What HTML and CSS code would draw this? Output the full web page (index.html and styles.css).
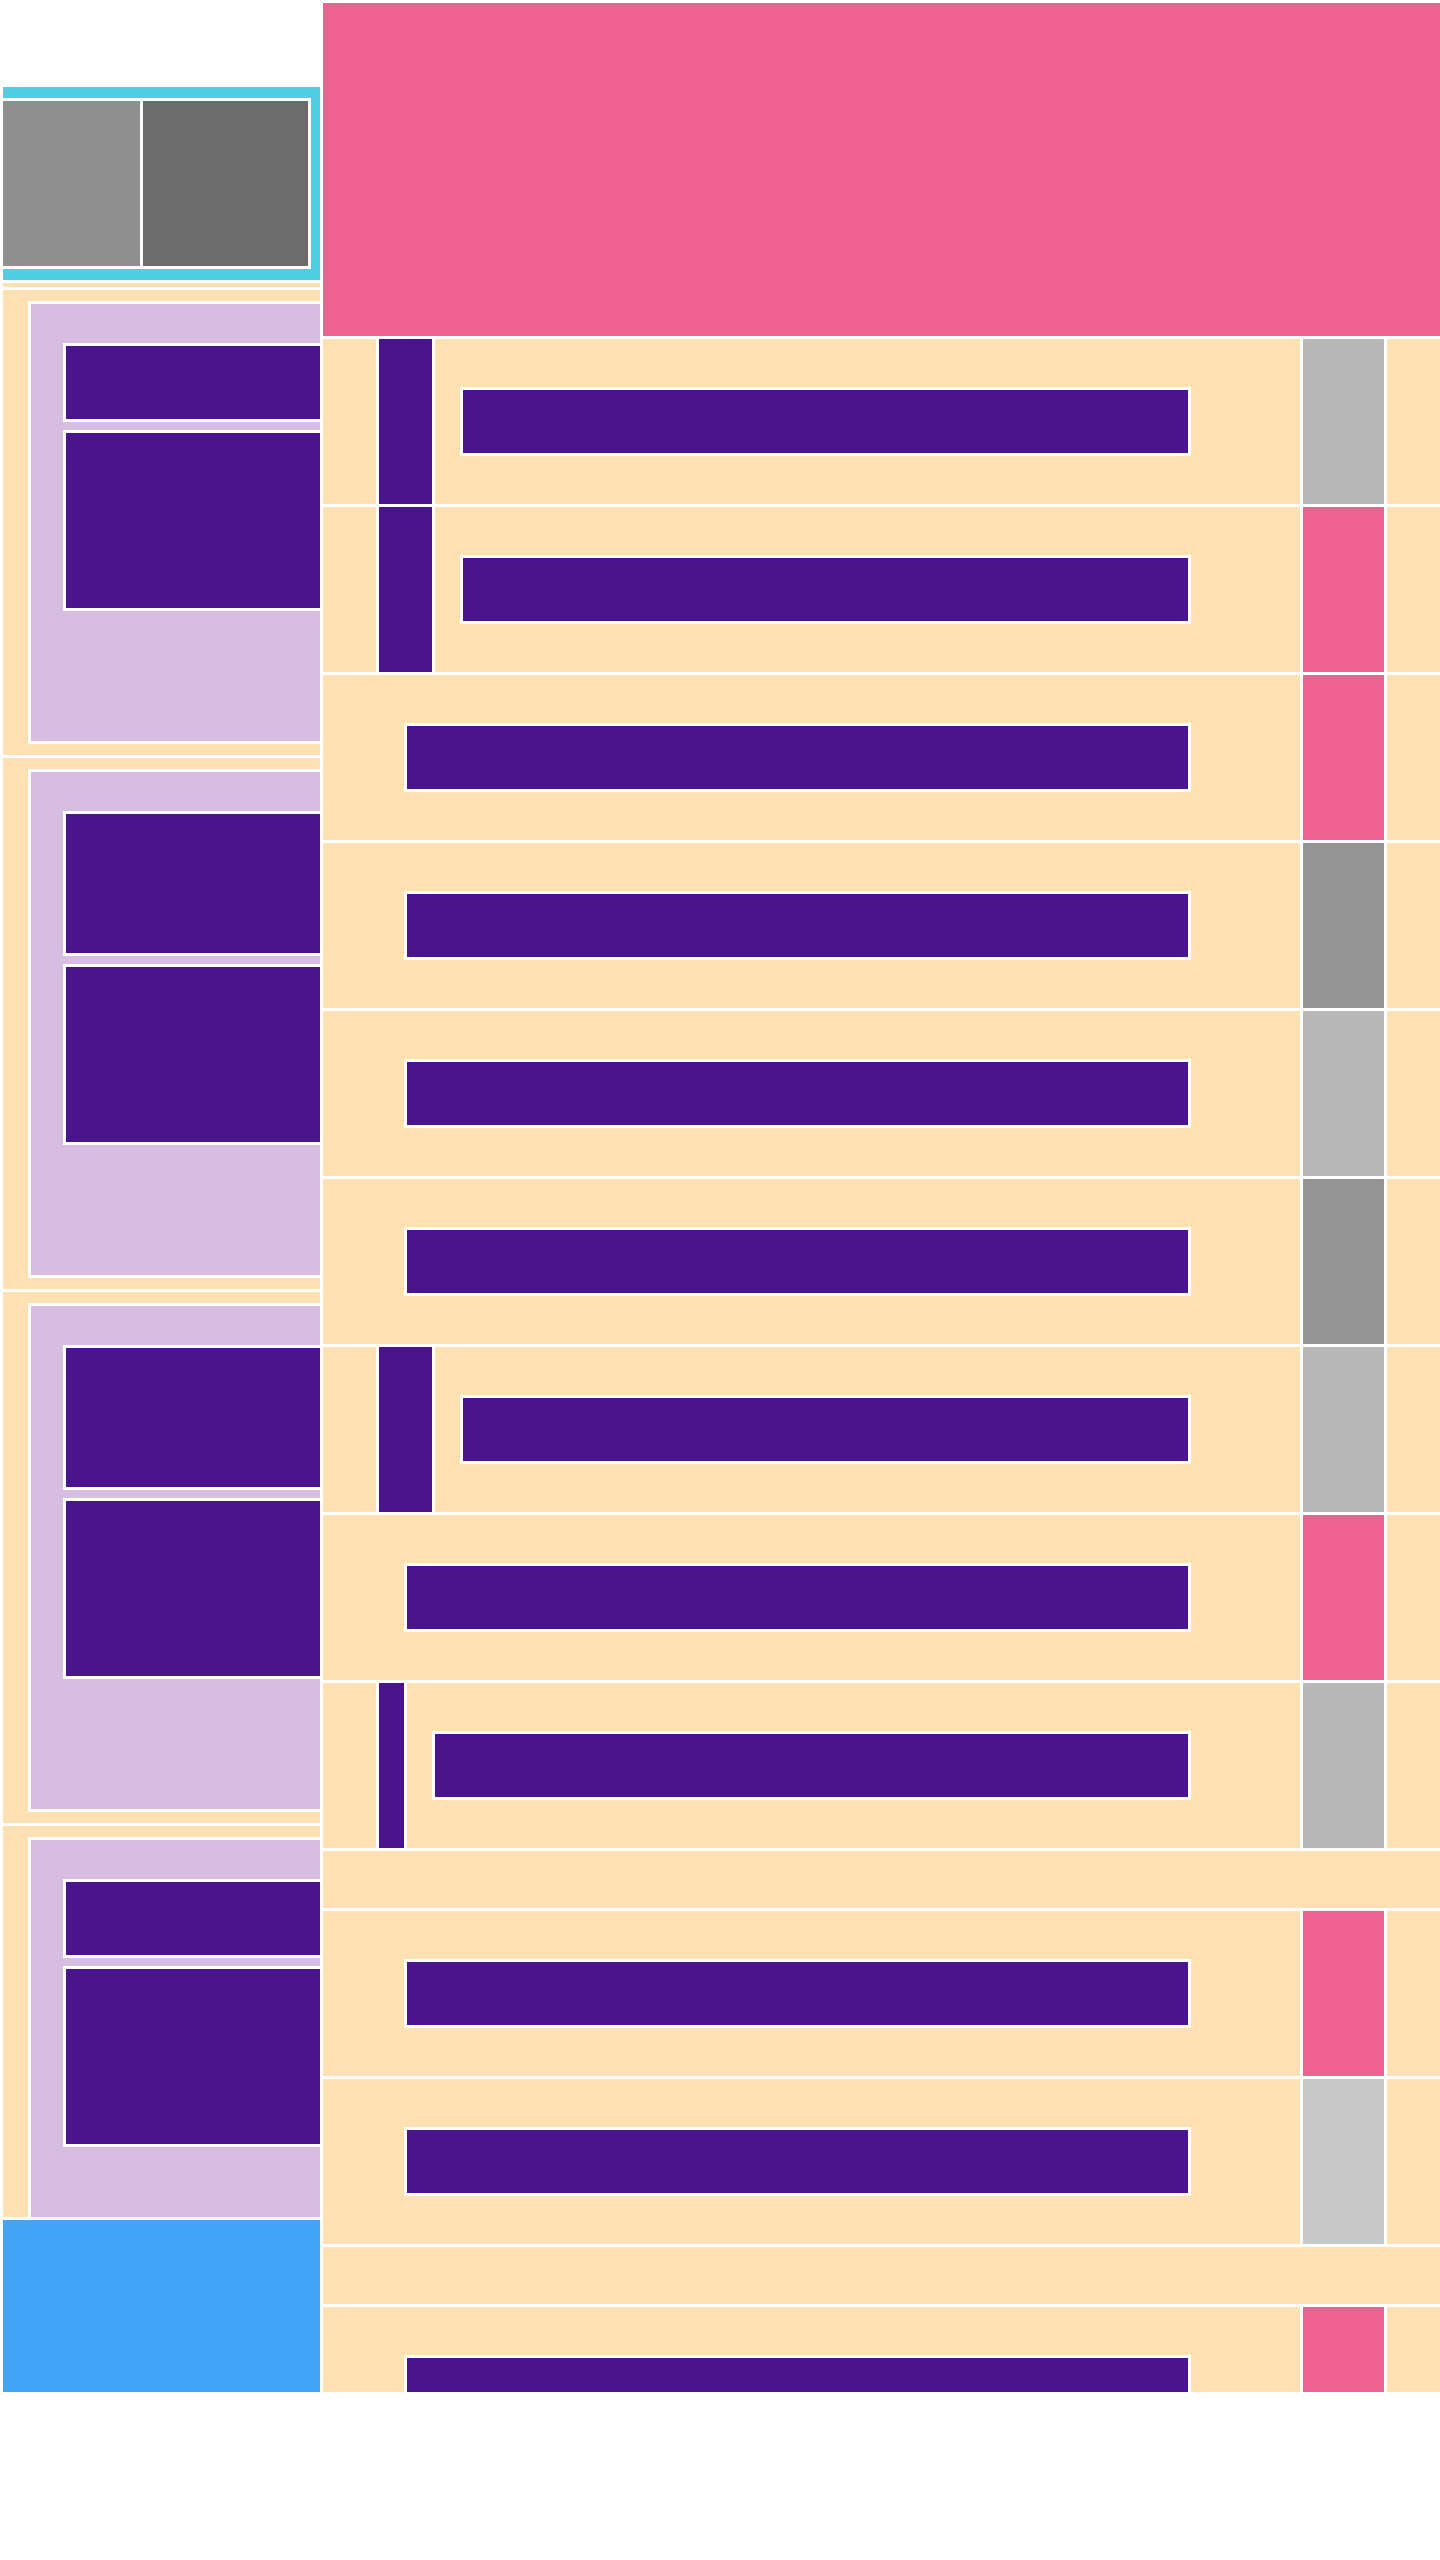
FILE: index.html
```html
<!doctype html>
<html lang="en">
    <head>
        <title>Layout</title>
        <meta charset="utf-8">
        <link rel="stylesheet" href="styles.css">
    </head>
    <body>
        <div class="app">

            <!-- left column -->
            <div class="sidebar">
                <div class="sidebar-top"></div>
                <div class="media">
                    <div class="thumbs">
                        <div class="thumb-a"></div>
                        <div class="thumb-b"></div>
                    </div>
                </div>
                <div class="divider"></div>
                <div class="card-list">
                    <div class="card">
                        <div class="panel">
                            <div class="block short"></div>
                            <div class="block"></div>
                        </div>
                    </div>
                    <div class="card">
                        <div class="panel">
                            <div class="block mid"></div>
                            <div class="block"></div>
                        </div>
                    </div>
                    <div class="card">
                        <div class="panel">
                            <div class="block mid"></div>
                            <div class="block"></div>
                        </div>
                    </div>
                    <div class="card">
                        <div class="panel">
                            <div class="block short"></div>
                            <div class="block"></div>
                        </div>
                    </div>
                </div>
                <div class="footer"></div>
            </div>

            <!-- right column -->
            <div class="main">
                <div class="hero"></div>

                <div class="row">
                    <div class="indent"></div>
                    <div class="marker"></div>
                    <div class="content"><div class="bar"></div></div>
                    <div class="status grey"></div>
                    <div class="tail"></div>
                </div>
                <div class="row">
                    <div class="indent"></div>
                    <div class="marker"></div>
                    <div class="content"><div class="bar"></div></div>
                    <div class="status pink"></div>
                    <div class="tail"></div>
                </div>
                <div class="row">
                    <div class="content flush"><div class="bar"></div></div>
                    <div class="status pink"></div>
                    <div class="tail"></div>
                </div>
                <div class="row">
                    <div class="content flush"><div class="bar"></div></div>
                    <div class="status dark"></div>
                    <div class="tail"></div>
                </div>
                <div class="row">
                    <div class="content flush"><div class="bar"></div></div>
                    <div class="status grey"></div>
                    <div class="tail"></div>
                </div>
                <div class="row">
                    <div class="content flush"><div class="bar"></div></div>
                    <div class="status dark"></div>
                    <div class="tail"></div>
                </div>
                <div class="row">
                    <div class="indent"></div>
                    <div class="marker"></div>
                    <div class="content"><div class="bar"></div></div>
                    <div class="status grey"></div>
                    <div class="tail"></div>
                </div>
                <div class="row">
                    <div class="content flush"><div class="bar"></div></div>
                    <div class="status pink"></div>
                    <div class="tail"></div>
                </div>
                <div class="row">
                    <div class="indent"></div>
                    <div class="marker thin"></div>
                    <div class="content"><div class="bar"></div></div>
                    <div class="status grey"></div>
                    <div class="tail"></div>
                </div>

                <div class="spacer"></div>

                <div class="row">
                    <div class="content flush"><div class="bar"></div></div>
                    <div class="status pink"></div>
                    <div class="tail"></div>
                </div>
                <div class="row">
                    <div class="content flush"><div class="bar"></div></div>
                    <div class="status pale"></div>
                    <div class="tail"></div>
                </div>

                <div class="spacer"></div>

                <div class="row">
                    <div class="content flush"><div class="bar"></div></div>
                    <div class="status pink"></div>
                    <div class="tail"></div>
                </div>
            </div>

        </div>
    </body>
</html>
```

FILE: styles.css
```css
body
{
    margin: 0;
    background-color: #fff;
    font-family: "Liberation Sans", sans-serif;
}

.app
{
    display: flex;
    gap: 3px;
    height: 2392px;
    padding: 3px 0 0 3px;
    box-sizing: border-box;
}

/* left column */
.sidebar
{
    width: 317px;
    flex-shrink: 0;
    display: flex;
    flex-direction: column;
    gap: 3px;
}
.sidebar-top
{
    height: 81px;
}
.media
{
    background-color: #4dd0e1;
    padding: 14px 12px 14px 0;
}
.thumbs
{
    display: flex;
    gap: 3px;
    height: 165px;
    background-color: #fff;
    outline: 3px solid #fff;
}
.thumb-a
{
    width: 137px;
    background-color: #8f8f8f;
}
.thumb-b
{
    flex: 1;
    background-color: #6c6c6c;
}
.divider
{
    height: 4px;
    background-color: #ffe0b2;
}
.card-list
{
    flex: 1;
    min-height: 0;
    overflow: hidden;
    display: flex;
    flex-direction: column;
    gap: 3px;
}
.card
{
    flex-shrink: 0;
    background-color: #ffe0b2;
    padding: 14px 0 14px 28px;
}
.panel
{
    background-color: #d7bde2;
    outline: 3px solid #fff;
    padding: 42px 0 133px 35px;
    display: flex;
    flex-direction: column;
    gap: 14px;
}
.block
{
    height: 175px;
    background-color: #4a148c;
    outline: 3px solid #fff;
}
.block.short { height: 73px; }
.block.mid { height: 139px; }
.footer
{
    height: 172px;
    flex-shrink: 0;
    background-color: #42a5f5;
}

/* right column */
.main
{
    flex: 1;
    min-width: 0;
    overflow: hidden;
    display: flex;
    flex-direction: column;
    gap: 3px;
}
.hero
{
    height: 333px;
    flex-shrink: 0;
    background-color: #f06292;
}
.row
{
    display: flex;
    gap: 3px;
    height: 165px;
    flex-shrink: 0;
}
.indent, .tail
{
    width: 53px;
    background-color: #ffe0b2;
}
.marker
{
    width: 53px;
    background-color: #4a148c;
}
.marker.thin { width: 25px; }
.content
{
    flex: 1;
    display: flex;
    align-items: center;
    padding: 0 112px 0 28px;
    background-color: #ffe0b2;
}
.content.flush { padding-left: 84px; }
.bar
{
    flex: 1;
    height: 63px;
    background-color: #4a148c;
    outline: 3px solid #fff;
}
.status { width: 81px; }
.status.grey { background-color: #b8b8b8; }
.status.dark { background-color: #959595; }
.status.pale { background-color: #c8c8c8; }
.status.pink { background-color: #f06292; }
.spacer
{
    height: 57px;
    flex-shrink: 0;
    background-color: #ffe0b2;
}
```
